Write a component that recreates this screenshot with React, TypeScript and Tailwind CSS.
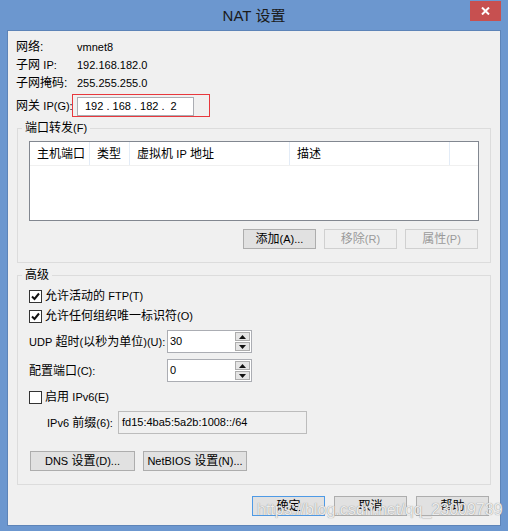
import React from "react";

function L({ children }: { children: React.ReactNode }) {
  return <span className="text-[11px]">{children}</span>;
}

function CheckBox({ checked }: { checked: boolean }) {
  return (
    <span className="flex h-[13px] w-[13px] shrink-0 items-center justify-center border border-[#333333] bg-white">
      {checked && (
        <svg width="11" height="11" viewBox="0 0 11 11">
          <path d="M2 5.5 L4.5 8 L9 2.5" fill="none" stroke="#111" strokeWidth="2" />
        </svg>
      )}
    </span>
  );
}

function Button({
  label,
  width = "w-[73px]",
  disabled = false,
  focused = false,
}: {
  label: React.ReactNode;
  width?: string;
  disabled?: boolean;
  focused?: boolean;
}) {
  const tone = disabled
    ? "border-[#d0d0d0] bg-[#efefef] text-[#9a9a9a]"
    : focused
      ? "border-[#4e9ae6] bg-[#e1e1e1] text-black"
      : "border-[#adadad] bg-[#e1e1e1] text-black";
  return (
    <div className={`flex h-[20px] ${width} items-center justify-center border ${tone}`}>
      <span className="whitespace-nowrap">{label}</span>
    </div>
  );
}

function Spin({ value }: { value: string }) {
  return (
    <div className="flex h-[23px] w-[85px] items-center justify-between border border-[#abadb3] bg-white pl-[2px] pr-[1px]">
      <span className="text-[11px]">{value}</span>
      <div className="flex flex-col gap-[1px]">
        <div className="flex h-[9px] w-[15px] items-center justify-center border border-[#adadad] bg-[#e5e5e5]">
          <svg width="7" height="4" viewBox="0 0 7 4">
            <path d="M0 4 L3.5 0 L7 4 Z" fill="#111" />
          </svg>
        </div>
        <div className="flex h-[9px] w-[15px] items-center justify-center border border-[#adadad] bg-[#e5e5e5]">
          <svg width="7" height="4" viewBox="0 0 7 4">
            <path d="M0 0 L3.5 4 L7 0 Z" fill="#111" />
          </svg>
        </div>
      </div>
    </div>
  );
}

const info = [
  { label: "网络:", value: "vmnet8" },
  { label: <>子网 <L>IP:</L></>, value: "192.168.182.0" },
  { label: "子网掩码:", value: "255.255.255.0" },
];

const columns = [
  { title: <>主机端口</>, w: "w-[60px]" },
  { title: <>类型</>, w: "w-[40px]" },
  { title: <>虚拟机 <L>IP</L> 地址</>, w: "w-[160px]" },
  { title: <>描述</>, w: "w-[160px]" },
];

export default function App() {
  return (
    <div className="relative flex h-[531px] w-[508px] flex-col overflow-hidden bg-[#6c97cf] font-['Liberation_Sans','Noto_Sans_CJK_SC',sans-serif] text-[12px] leading-none text-black">
      {/* title bar */}
      <div className="flex h-[30px] shrink-0">
        <div className="w-[38px]" />
        <div className="flex flex-1 items-center justify-center pt-[1px] text-[15px] text-[#1b1b1b]">
          NAT 设置
        </div>
        <div className="flex w-[38px] items-start justify-start">
          <div className="mt-[1px] flex h-[20px] w-[31px] items-center justify-center bg-[#c75050]">
            <svg width="9" height="8" viewBox="0 0 9 8">
              <path d="M1 0.5 L8 7.5 M8 0.5 L1 7.5" stroke="#fff" strokeWidth="2" />
            </svg>
          </div>
        </div>
      </div>

      {/* client area */}
      <div className="mx-[7px] flex h-[496px] flex-col border border-[#5d84b8] bg-[#f0f0f0]">
        <div className="flex flex-col pl-[8px] pt-[7px]">
          {info.map((row, i) => (
            <div key={i} className="flex h-[18px] items-center">
              <span className="w-[61px]">{row.label}</span>
              <span className="text-[11px]">{row.value}</span>
            </div>
          ))}
          <div className="mt-[2px] flex h-[23px] items-center">
            <span className="w-[56px] shrink-0 whitespace-nowrap">
              网关 <L>IP(G):</L>
            </span>
            <div className="h-[23px] w-[138px] border border-[#e8383d] pl-[4px] pt-[2px]">
              <div className="flex h-[19px] w-[117px] items-center border border-[#abadb3] bg-white pl-[7px] text-[11px] whitespace-pre">
                192 . 168 . 182 .  2
              </div>
            </div>
          </div>
        </div>

        {/* port forwarding */}
        <fieldset className="mx-[9px] mt-[3px] border border-[#dcdcdc] pb-[13px]">
          <legend className="ml-[4px] h-[16px] px-[3px] leading-[16px]">
            端口转发<L>(F)</L>
          </legend>
          <div className="mx-[11px] mt-[5px] flex h-[80px] flex-col border border-[#828790] bg-white">
            <div className="flex h-[24px] border-b border-[#f0f0f0]">
              {columns.map((c, i) => (
                <div key={i} className={`flex ${c.w} items-center border-r border-[#e3ecf7] pl-[7px]`}>
                  <span className="whitespace-nowrap">{c.title}</span>
                </div>
              ))}
              <div className="flex-1" />
            </div>
          </div>
          <div className="mr-[12px] mt-[8px] flex justify-end gap-[8px]">
            <Button label={<>添加<L>(A)...</L></>} />
            <Button label={<>移除<L>(R)</L></>} disabled />
            <Button label={<>属性<L>(P)</L></>} disabled />
          </div>
        </fieldset>

        {/* advanced */}
        <fieldset className="mx-[9px] mt-[4px] border border-[#dcdcdc] pb-[13px]">
          <legend className="ml-[4px] h-[16px] px-[3px] leading-[16px]">高级</legend>
          <div className="ml-[11px] mt-[3px] flex flex-col">
            <div className="flex h-[20px] items-center gap-[3px]">
              <CheckBox checked />
              <span>
                允许活动的 <L>FTP(T)</L>
              </span>
            </div>
            <div className="flex h-[20px] items-center gap-[3px]">
              <CheckBox checked />
              <span>
                允许任何组织唯一标识符<L>(O)</L>
              </span>
            </div>
            <div className="mt-[4px] flex items-center">
              <span className="w-[138px]">
                <L>UDP</L> 超时<L>(</L>以秒为单位<L>)(U):</L>
              </span>
              <Spin value="30" />
            </div>
            <div className="mt-[6px] flex items-center">
              <span className="w-[138px]">
                配置端口<L>(C):</L>
              </span>
              <Spin value="0" />
            </div>
            <div className="mt-[5px] flex h-[20px] items-center gap-[3px]">
              <CheckBox checked={false} />
              <span>
                启用 <L>IPv6(E)</L>
              </span>
            </div>
            <div className="mt-[4px] flex items-center pl-[18px]">
              <span className="w-[71px]">
                <L>IPv6</L> 前缀<L>(6):</L>
              </span>
              <div className="flex h-[23px] w-[189px] items-center border border-[#bcbcbc] bg-[#f0f0f0] pl-[3px] text-[11px]">
                fd15:4ba5:5a2b:1008::/64
              </div>
            </div>
            <div className="ml-[1px] mt-[17px] flex gap-[8px]">
              <Button label={<><L>DNS</L> 设置<L>(D)...</L></>} width="w-[105px]" />
              <Button label={<><L>NetBIOS</L> 设置<L>(N)...</L></>} width="w-[104px]" />
            </div>
          </div>
        </fieldset>

        <div className="mr-[11px] mt-[11px] flex justify-end gap-[9px]">
          <Button label="确定" focused />
          <Button label="取消" />
          <Button label="帮助" />
        </div>
      </div>

      <span className="pointer-events-none absolute left-[257px] top-[502px] text-[16px] text-[#ececec] [text-shadow:0_0_1px_#7a7a7a]">
        https://blog.csdn.net/qq_23009739
      </span>
    </div>
  );
}
